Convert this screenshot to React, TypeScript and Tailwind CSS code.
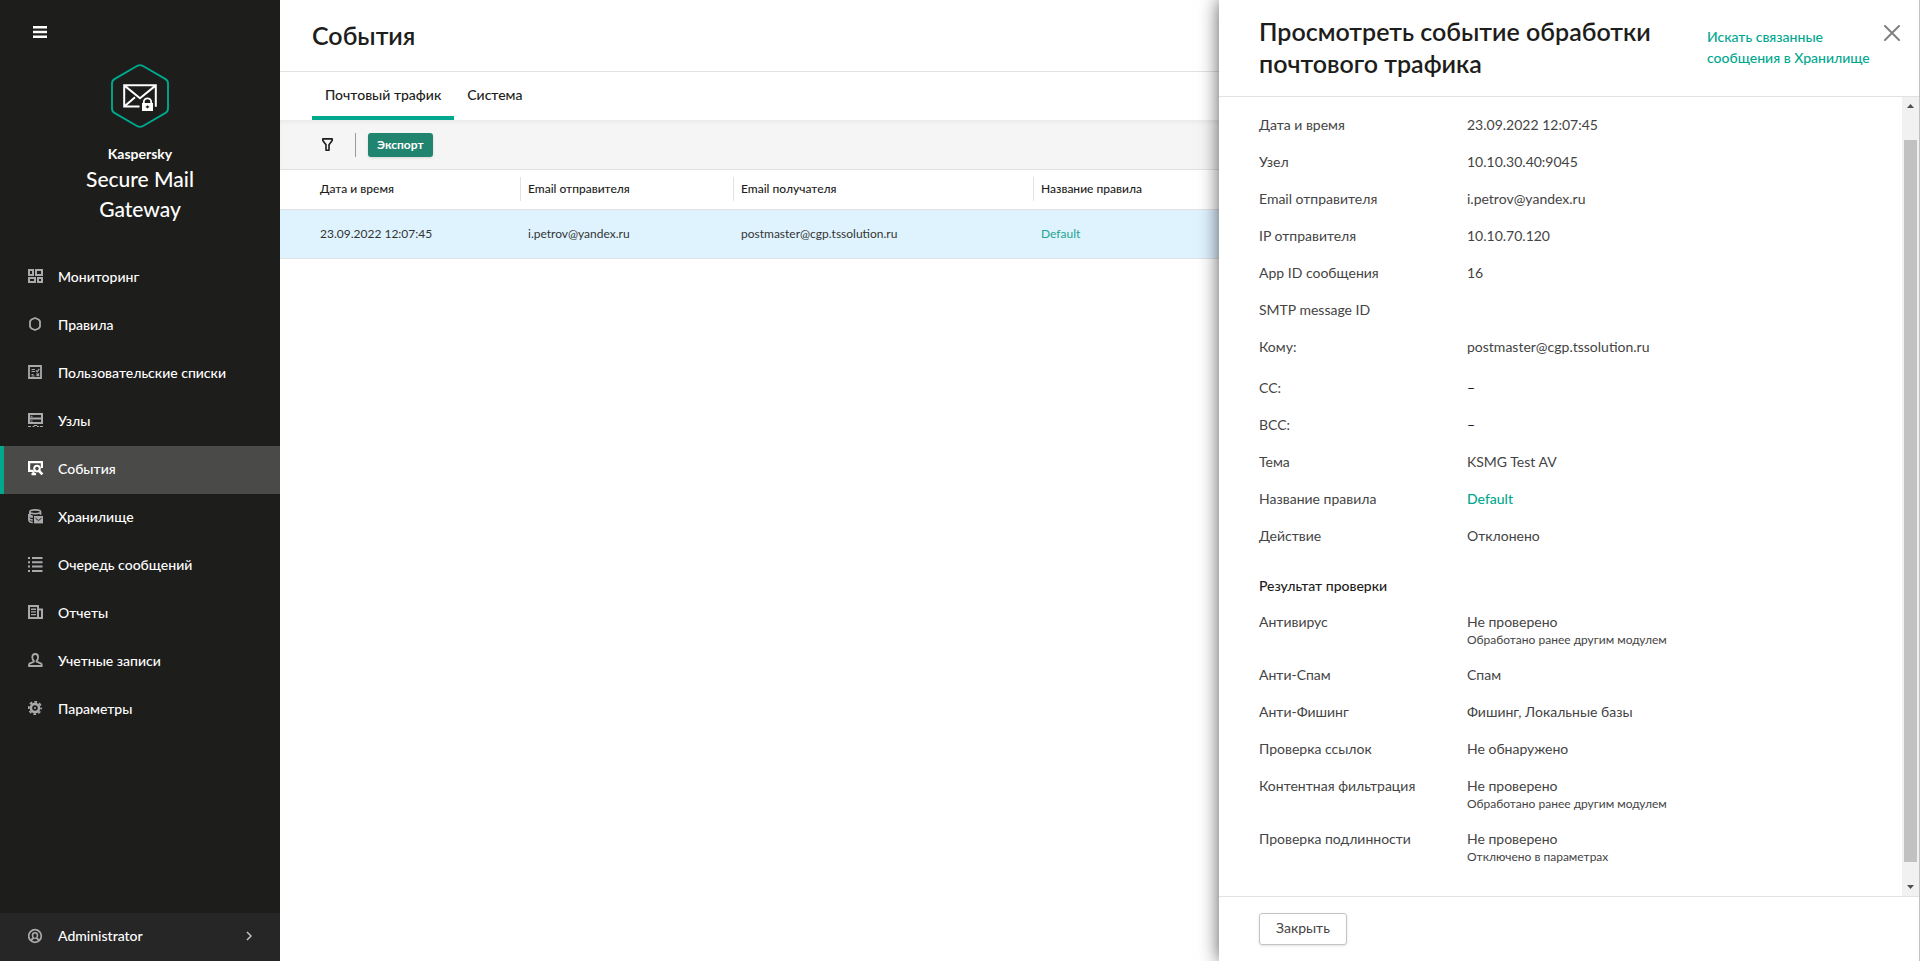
import { FC, ReactNode } from 'react';
import { clsx } from 'clsx';

type IconProps = { children: ReactNode };

const Icon: FC<IconProps> = ({ children }) => (
  <svg viewBox="0 0 16 16" className="w-4 h-4 shrink-0" fill="none" stroke="currentColor" aria-hidden="true">
    {children}
  </svg>
);

const MonitoringIcon = () => (
  <Icon>
    <path strokeWidth="2" d="M1 1h4v5H1zM8 1h6v5H8zM1 9h6v4H1zM10 9h4v4h-4z" />
  </Icon>
);

const RulesIcon = () => (
  <Icon>
    <path strokeWidth="1.8" strokeLinejoin="round" d="m7 1 3.6 1.5L12 4.4v5.2l-1.4 1.9L7 13l-3.6-1.5L2 9.600V4.400l1.400-1.900z" />
  </Icon>
);

const ListsIcon = () => (
  <Icon>
    <path strokeWidth="1.8" d="M1 1h12v12H1z" />
    <path strokeWidth="1.2" d="M3.500 4.500H7M3.500 6.500H7M3.500 9.500h2M3.500 11h3M8 5.500l1.200 1.300 2-3M8.500 8.500l2.600 2.600M11.100 8.500l-2.600 2.600" />
  </Icon>
);

const NodesIcon = () => (
  <Icon>
    <path strokeWidth="2" d="M1 1h13v9H1zM1 5.500h13" />
    <path strokeWidth="1" d="M2.500 3.300h2M2.500 8h2M0 13.500h3M4.500 13.500h2M9 13.500h2M12 13.500h3M5.800 12.500h3.400" />
  </Icon>
);

const EventsIcon = () => (
  <Icon>
    <path strokeWidth="2.2" d="M5 9.800H1.100V1.100h12.800V7" />
    <path strokeWidth="2.2" d="M3.500 13.200H8M5.500 9.500v3.500" />
    <circle cx="9" cy="7.600" r="2.800" strokeWidth="2" />
    <path strokeWidth="2.600" d="m11 9.800 3.400 3.600" />
  </Icon>
);

const StorageIcon = () => (
  <Icon>
    <path strokeWidth="1.600" d="M1.800 2.800c0-2.600 10.800-2.600 10.800 0S1.800 5.400 1.800 2.800v2.400c0 1 1 1.600 3 2M12.600 2.800v3" />
    <path strokeWidth="1.500" d="M.8 5.500c0 1.800 1.500 2.600 4 2.800M.8 8.200c0 1.800 1.500 2.600 4 2.800M.8 10.800c0 1.800 1.500 2.600 4 2.800M.8 5v6" />
    <path fill="currentColor" stroke="none" d="M6 7h9v7.400H6z" />
    <path stroke="#1d1d1b" strokeWidth="1" d="m7.400 9 3.100 2.600L13.600 9" />
  </Icon>
);

const QueueIcon = () => (
  <Icon>
    <path strokeWidth="2" d="M0 1h2M4 1h10.500M0 5.300h2M4 5.300h10.500M0 9.600h2M4 9.600h10.500M0 14h2M4 14h10.500" />
  </Icon>
);

const ReportsIcon = () => (
  <Icon>
    <path strokeWidth="2" d="M1 1h9v12H1zM10 4.500h4V13h-4" />
    <path strokeWidth="1.400" d="M3 4.200h5M3 6.900h5M3 9.600h5" />
  </Icon>
);

const AccountsIcon = () => (
  <Icon>
    <path
      strokeWidth="1.800"
      strokeLinejoin="round"
      d="M7.200 1c2 0 2.900 1.400 2.900 3.300 0 1.500-.6 2.800-1.500 3.500v.9l4.600 1.900c.4.200.6 1 .6 2.400H.9c0-1.400.2-2.200.6-2.400l4.300-1.900v-.9C4.900 7.100 4.300 5.800 4.300 4.300 4.300 2.400 5.200 1 7.200 1z"
    />
  </Icon>
);

const SettingsIcon = () => (
  <Icon>
    <circle cx="7" cy="7" r="4.100" strokeWidth="2.600" />
    <circle cx="7" cy="7" r="6.200" strokeWidth="1.800" strokeDasharray="2.670 2.200" strokeDashoffset="1.330" />
    <circle cx="7" cy="7" r="1" fill="currentColor" stroke="none" />
  </Icon>
);

const UserIcon = () => (
  <Icon>
    <circle cx="7" cy="8" r="6.300" strokeWidth="1.700" />
    <path
      strokeWidth="1.600"
      d="M3.400 12.600c.2-1.700 1-2.200 2.400-2.500-.9-.7-1.300-1.600-1.300-2.700C4.500 5.800 5.500 4.800 7 4.800s2.500 1 2.500 2.600c0 1.100-.4 2-1.300 2.700 1.400.3 2.200.8 2.400 2.500"
    />
  </Icon>
);

const ProductLogo = () => (
  <svg viewBox="0 0 58 64" className="w-[58px] h-16" fill="none" aria-hidden="true">
    <path
      stroke="#00a88e"
      strokeWidth="1.900"
      d="M26.400 1.800q2.600-1.400 5.200 0l22.600 13.100q2.800 1.600 2.800 4.600v25q0 3-2.800 4.600L31.600 62.200q-2.600 1.400-5.200 0L3.800 49.100Q1 47.500 1 44.500v-25q0-3 2.800-4.600z"
    />
    <path stroke="#fff" strokeWidth="2" d="M28.500 42.500H13.200V21.200h31.600v21.500M13.200 21.400 29 34.200l15.800-12.800M13.600 42.200l10.400-9" />
    <path stroke="#fff" strokeWidth="1.800" d="M32.800 40v-2a3.700 3.700 0 0 1 7.400 0v2" />
    <path fill="#fff" d="M31 39h11v8H31z" />
    <path stroke="#1d1d1b" strokeWidth="1.200" d="M34.800 42.800h3.400M36.500 41.400v2.800" />
  </svg>
);

const menu = [
  { title: 'Мониторинг', icon: <MonitoringIcon /> },
  { title: 'Правила', icon: <RulesIcon /> },
  { title: 'Пользовательские списки', icon: <ListsIcon /> },
  { title: 'Узлы', icon: <NodesIcon /> },
  { title: 'События', icon: <EventsIcon />, active: true },
  { title: 'Хранилище', icon: <StorageIcon /> },
  { title: 'Очередь сообщений', icon: <QueueIcon /> },
  { title: 'Отчеты', icon: <ReportsIcon /> },
  { title: 'Учетные записи', icon: <AccountsIcon /> },
  { title: 'Параметры', icon: <SettingsIcon /> },
];

const Sidebar = () => (
  <aside className="flex flex-col w-[280px] shrink-0 bg-[#1d1d1b] text-white">
    <button type="button" aria-label="Меню" className="self-start mt-6 ml-[33px]">
      <svg viewBox="0 0 14 16" className="w-3.5 h-4" stroke="#fff" strokeWidth="2.400" aria-hidden="true">
        <path d="M0 3.200h14M0 8h14M0 12.800h14" />
      </svg>
    </button>
    <div className="flex flex-col items-center mt-6 text-center">
      <ProductLogo />
      <span className="mt-4 text-sm font-bold">Kaspersky</span>
      <span className="w-40 text-[21px] leading-[30px] font-medium">Secure Mail Gateway</span>
    </div>
    <nav className="mt-[30px]">
      <ul>
        {menu.map(({ title, icon, active }) => (
          <li key={title}>
            <a
              href="#"
              className={clsx(
                'flex items-center gap-3.5 h-12 pl-6 pb-0.5 border-l-4 text-sm font-medium',
                active ? 'border-[#00a88e] bg-[#4a4a48]' : 'border-transparent',
              )}
            >
              <span className={active ? 'text-white' : 'text-[#a9aaac]'}>{icon}</span>
              {title}
            </a>
          </li>
        ))}
      </ul>
    </nav>
    <button type="button" className="flex items-center gap-3.5 h-12 mt-auto pl-7 pr-7 pb-0.5 bg-[#262626] text-sm font-medium">
      <span className="text-[#a9aaac]">
        <UserIcon />
      </span>
      Administrator
      <svg viewBox="0 0 6 10" className="w-1.5 h-2.5 ml-auto" fill="none" stroke="#c4c4c4" strokeWidth="1.500" aria-hidden="true">
        <path d="m1 1 4 4-4 4" />
      </svg>
    </button>
  </aside>
);

const Toolbar = () => (
  <div className="flex items-center h-[50px] pl-[42px] border-b border-[#e2e2e2] bg-[#f5f5f5] shadow-[inset_0_3px_3px_rgba(0,0,0,0.04)]">
    <button type="button" aria-label="Фильтр">
      <svg viewBox="0 0 12 13" className="w-3 h-[13px]" fill="none" stroke="#1d1d1b" strokeWidth="1.600" strokeLinejoin="round" aria-hidden="true">
        <path d="M.8.900h9.400v1.600L7 6.800v5.400H4V6.800L.8 2.500z" />
      </svg>
    </button>
    <div className="w-px h-6 ml-[21px] bg-[#9a9a9a]" />
    <button type="button" className="h-6 ml-3 px-[9px] rounded-[3px] bg-[#21846e] text-white text-xs font-bold shadow-sm">
      Экспорт
    </button>
  </div>
);

const columns = [
  { title: 'Дата и время', head: 'w-[241px]', cell: 'pl-10 border-r' },
  { title: 'Email отправителя', head: 'w-[213px]', cell: 'pl-[7px] border-r' },
  { title: 'Email получателя', head: 'w-[300px]', cell: 'pl-[7px] border-r' },
  { title: 'Название правила', head: '', cell: 'pl-[7px]' },
];

const EventsTable = () => (
  <table className="w-full table-fixed text-xs text-left">
    <thead>
      <tr className="h-[39px] border-b border-[#e2e2e2]">
        {columns.map(({ title, head, cell }) => (
          <th key={title} className={clsx('p-0 font-medium text-[#1d1d1b]', head)}>
            <div className={clsx('h-6 leading-6 border-[#e2e2e2]', cell)}>{title}</div>
          </th>
        ))}
      </tr>
    </thead>
    <tbody>
      <tr className="h-[49px] border-b border-[#e2e2e2] bg-[#dff3ff] text-[#333]">
        <td className="pl-10">23.09.2022 12:07:45</td>
        <td className="pl-[7px]">i.petrov@yandex.ru</td>
        <td className="pl-[7px]">postmaster@cgp.tssolution.ru</td>
        <td className="pl-[7px]">
          <a href="#" className="text-[#22a591]">
            Default
          </a>
        </td>
      </tr>
    </tbody>
  </table>
);

type Row = { label: string; value?: string; note?: string; link?: boolean; wide?: boolean };

const details: Row[] = [
  { label: 'Дата и время', value: '23.09.2022 12:07:45' },
  { label: 'Узел', value: '10.10.30.40:9045' },
  { label: 'Email отправителя', value: 'i.petrov@yandex.ru' },
  { label: 'IP отправителя', value: '10.10.70.120' },
  { label: 'App ID сообщения', value: '16' },
  { label: 'SMTP message ID' },
  { label: 'Кому:', value: 'postmaster@cgp.tssolution.ru', wide: true },
  { label: 'CC:', value: '–' },
  { label: 'BCC:', value: '–' },
  { label: 'Тема', value: 'KSMG Test AV' },
  { label: 'Название правила', value: 'Default', link: true },
  { label: 'Действие', value: 'Отклонено' },
];

const results: Row[] = [
  { label: 'Антивирус', value: 'Не проверено', note: 'Обработано ранее другим модулем' },
  { label: 'Анти-Спам', value: 'Спам' },
  { label: 'Анти-Фишинг', value: 'Фишинг, Локальные базы' },
  { label: 'Проверка ссылок', value: 'Не обнаружено' },
  { label: 'Контентная фильтрация', value: 'Не проверено', note: 'Обработано ранее другим модулем' },
  { label: 'Проверка подлинности', value: 'Не проверено', note: 'Отключено в параметрах' },
];

const DetailList: FC<{ rows: Row[] }> = ({ rows }) => (
  <dl className="text-sm leading-[21px] text-[#444]">
    {rows.map(({ label, value, note, link, wide }) => (
      <div key={label} className={clsx('flex', wide ? 'pb-5' : 'pb-4')}>
        <dt className="w-[208px] shrink-0">{label}</dt>
        <dd className={clsx(value === '–' && 'font-medium text-[#1d1d1b]')}>
          {link ? (
            <a href="#" className="font-medium text-[#00a88e]">
              {value}
            </a>
          ) : (
            value
          )}
          {note && <p className="text-xs">{note}</p>}
        </dd>
      </div>
    ))}
  </dl>
);

const ScrollBar = () => (
  <div className="flex flex-col items-center w-[17px] shrink-0 bg-[#f1f1f1]" aria-hidden="true">
    <svg viewBox="0 0 17 17" className="w-[17px] h-[17px] shrink-0" fill="#505050">
      <path d="m5 11 3.500-4 3.500 4z" />
    </svg>
    <div className="w-[13px] mt-[26px] mb-[17px] grow bg-[#c1c1c1]" />
    <svg viewBox="0 0 17 17" className="w-[17px] h-[17px] shrink-0" fill="#505050">
      <path d="m5 6 3.500 4L12 6z" />
    </svg>
  </div>
);

const EventDrawer = () => (
  <section className="absolute inset-y-0 right-0 flex flex-col w-[701px] max-w-full border-r border-[#c1c1c1] bg-white shadow-[0_0_18px_rgba(0,0,0,0.65)]">
    <header className="flex items-start h-[97px] shrink-0 pl-10 pr-[19px] border-b border-[#e2e2e2]">
      <h2 className="w-[420px] mt-[15px] text-[25px] leading-8 font-semibold text-[#1d1d1b]">
        Просмотреть событие обработки почтового трафика
      </h2>
      <a href="#" className="w-[170px] mt-[26px] ml-7 text-sm leading-[21px] font-medium text-[#00a88e]">
        Искать связанные сообщения в Хранилище
      </a>
      <button type="button" aria-label="Закрыть панель" className="mt-[25px] ml-auto">
        <svg viewBox="0 0 16 16" className="w-4 h-4" stroke="#808080" strokeWidth="2" strokeLinecap="round" aria-hidden="true">
          <path d="m1 1 14 14M15 1 1 15" />
        </svg>
      </button>
    </header>
    <div className="flex grow min-h-0">
      <div className="grow overflow-hidden pt-[17px] pl-10">
        <DetailList rows={details} />
        <h3 className="mt-[13px] mb-[15px] text-sm leading-[21px] font-medium text-[#1d1d1b]">Результат проверки</h3>
        <DetailList rows={results} />
      </div>
      <ScrollBar />
    </div>
    <footer className="h-[65px] shrink-0 pt-4 pl-10 border-t border-[#e2e2e2]">
      <button type="button" className="h-8 px-4 pb-0.5 rounded-[3px] border border-[#c4c4c4] text-sm text-[#444] shadow-sm">
        Закрыть
      </button>
    </footer>
  </section>
);

export default function App() {
  return (
    <div className="relative flex min-h-screen overflow-hidden bg-white font-['Lato','Open_Sans',sans-serif]">
      <Sidebar />
      <main className="grow min-w-0">
        <h1 className="h-[72px] pl-8 leading-[70px] border-b border-[#e2e2e2] text-[25px] font-semibold text-[#1d1d1b]">
          События
        </h1>
        <div className="flex h-12 pl-8 text-sm font-medium text-[#1d1d1b]" role="tablist">
          <button type="button" role="tab" aria-selected="true" className="px-[13px] pt-0.5 border-b-4 border-[#00a88e]">
            Почтовый трафик
          </button>
          <button type="button" role="tab" aria-selected="false" className="px-[13px] pt-0.5 border-b-4 border-transparent">
            Система
          </button>
        </div>
        <Toolbar />
        <EventsTable />
      </main>
      <EventDrawer />
    </div>
  );
}
